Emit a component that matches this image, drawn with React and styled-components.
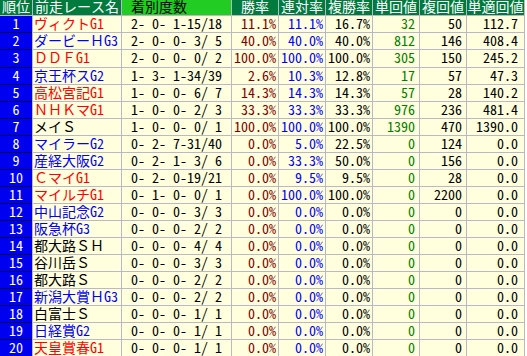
import React from "react";
import styled, { createGlobalStyle } from "styled-components";

const GlobalStyle = createGlobalStyle`
  html, body {
    margin: 0;
    padding: 0;
    background: #ffffff;
  }
  body {
    font-family: "Noto Sans Mono CJK JP", "Noto Sans CJK JP", "DejaVu Sans Mono", monospace;
  }
`;

const rows = [
  ["ヴィクトG1", "2- 0- 1-15/18", "11.1%", "11.1%", "16.7%", "32", "50", "112.7"],
  ["ダービーＨG3", "2- 0- 0- 3/ 5", "40.0%", "40.0%", "40.0%", "812", "146", "408.4"],
  ["ＤＤＦG1", "2- 0- 0- 0/ 2", "100.0%", "100.0%", "100.0%", "305", "150", "245.2"],
  ["京王杯スG2", "1- 3- 1-34/39", "2.6%", "10.3%", "12.8%", "17", "57", "47.3"],
  ["高松宮記G1", "1- 0- 0- 6/ 7", "14.3%", "14.3%", "14.3%", "57", "28", "140.2"],
  ["ＮＨＫマG1", "1- 0- 0- 2/ 3", "33.3%", "33.3%", "33.3%", "976", "236", "481.4"],
  ["メイＳ", "1- 0- 0- 0/ 1", "100.0%", "100.0%", "100.0%", "1390", "470", "1390.0"],
  ["マイラーG2", "0- 2- 7-31/40", "0.0%", "5.0%", "22.5%", "0", "124", "0.0"],
  ["産経大阪G2", "0- 2- 1- 3/ 6", "0.0%", "33.3%", "50.0%", "0", "156", "0.0"],
  ["ＣマイG1", "0- 2- 0-19/21", "0.0%", "9.5%", "9.5%", "0", "28", "0.0"],
  ["マイルチG1", "0- 1- 0- 0/ 1", "0.0%", "100.0%", "100.0%", "0", "2200", "0.0"],
  ["中山記念G2", "0- 0- 0- 3/ 3", "0.0%", "0.0%", "0.0%", "0", "0", "0.0"],
  ["阪急杯G3", "0- 0- 0- 2/ 2", "0.0%", "0.0%", "0.0%", "0", "0", "0.0"],
  ["都大路ＳＨ", "0- 0- 0- 4/ 4", "0.0%", "0.0%", "0.0%", "0", "0", "0.0"],
  ["谷川岳Ｓ", "0- 0- 0- 3/ 3", "0.0%", "0.0%", "0.0%", "0", "0", "0.0"],
  ["都大路Ｓ", "0- 0- 0- 2/ 2", "0.0%", "0.0%", "0.0%", "0", "0", "0.0"],
  ["新潟大賞ＨG3", "0- 0- 0- 2/ 2", "0.0%", "0.0%", "0.0%", "0", "0", "0.0"],
  ["白富士Ｓ", "0- 0- 0- 1/ 1", "0.0%", "0.0%", "0.0%", "0", "0", "0.0"],
  ["日経賞G2", "0- 0- 0- 1/ 1", "0.0%", "0.0%", "0.0%", "0", "0", "0.0"],
  ["天皇賞春G1", "0- 0- 0- 1/ 1", "0.0%", "0.0%", "0.0%", "0", "0", "0.0"],
];

const gradeColor = (name) => {
  if (name.includes("G1")) return "#ff0000";
  if (name.includes("G2") || name.includes("G3")) return "#0000ff";
  return "#000000";
};

// one row is a pixel taller in the reference
const rowHeights = rows.map((_, i) => (i === 2 ? 17 : 16));

export default function App() {
  return (
    <>
      <GlobalStyle />
      <Table $rows={rowHeights}>
        <HeadCell>順位</HeadCell>
        <HeadCell>前走レース名</HeadCell>
        <HeadCell $bright $left>着別度数</HeadCell>
        <HeadCell>勝率</HeadCell>
        <HeadCell>連対率</HeadCell>
        <HeadCell>複勝率</HeadCell>
        <HeadCell>単回値</HeadCell>
        <HeadCell>複回値</HeadCell>
        <HeadCell>単適回値</HeadCell>

        {rows.map((r, i) => (
          <React.Fragment key={i}>
            <RankCell>{i + 1}</RankCell>
            <NameCell $color={gradeColor(r[0])}>{r[0]}</NameCell>
            <RecordCell>{r[1]}</RecordCell>
            <NumCell $color="#800000">{r[2]}</NumCell>
            <NumCell $color="#0000ff">{r[3]}</NumCell>
            <NumCell>{r[4]}</NumCell>
            <NumCell $color="#008000" $pad={4}>{r[5]}</NumCell>
            <NumCell $pad={4}>{r[6]}</NumCell>
            <NumCell $pad={6}>{r[7]}</NumCell>
          </React.Fragment>
        ))}
      </Table>
    </>
  );
}

const Table = styled.div`
  display: grid;
  grid-template-columns: 32px 88px 109px 46px 46px 46px 46px 46px 57px;
  grid-template-rows: 15px ${(p) => p.$rows.map((h) => `${h}px`).join(" ")};
  gap: 1px;
  width: 524px;
  padding-right: 1px;
  background: #b8b8c8;
  font-size: 14px;
  line-height: 14px;
  overflow: hidden;
  height: 356px;
`;

const Cell = styled.div`
  display: flex;
  align-items: center;
  white-space: pre;
  overflow: hidden;
  padding-bottom: 3px;
`;

const HeadCell = styled(Cell)`
  background: ${(p) => (p.$bright ? "#22cc22" : "#007a3d")};
  color: ${(p) => (p.$bright ? "#000000" : "#ffffff")};
  justify-content: ${(p) => (p.$left ? "flex-start" : "center")};
  padding-left: ${(p) => (p.$left ? "9px" : "0")};
`;

const RankCell = styled(Cell)`
  background: #0000f0;
  color: #ffffff;
  justify-content: center;
  box-shadow: 0 1px 0 #000050;
`;

const NameCell = styled(Cell)`
  background: #ffffdd;
  color: ${(p) => p.$color};
  padding-left: 1px;
`;

const RecordCell = styled(Cell)`
  background: #ffffdd;
  color: #000000;
  justify-content: center;
`;

const NumCell = styled(Cell)`
  background: #ffffdd;
  color: ${(p) => p.$color || "#000000"};
  justify-content: flex-end;
  padding-right: ${(p) => p.$pad || 2}px;
`;
